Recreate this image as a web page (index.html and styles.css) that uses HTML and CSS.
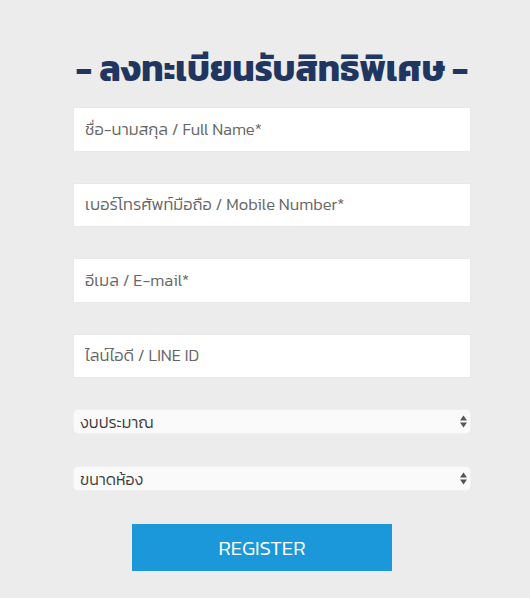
FILE: index.html
```html
<!DOCTYPE html>
<html lang="th">
<head>
    <meta charset="UTF-8">
    <meta name="viewport" content="width=device-width, initial-scale=1.0">
    <title>ลงทะเบียนรับสิทธิพิเศษ</title>
    <link rel="stylesheet" href="styles.css">
</head>
<body>

<!-- ฟอร์มลงทะเบียน -->
<div class="register-box">
    <h2 class="register-title">- ลงทะเบียนรับสิทธิพิเศษ -</h2>

    <form class="register-form">
        <input type="text" class="field" placeholder="ชื่อ-นามสกุล / Full Name*">
        <input type="tel" class="field" placeholder="เบอร์โทรศัพท์มือถือ / Mobile Number*">
        <input type="email" class="field" placeholder="อีเมล / E-mail*">
        <input type="text" class="field" placeholder="ไลน์ไอดี / LINE ID">

        <div class="select-wrap">
            <select class="picker">
                <option>งบประมาณ</option>
            </select>
            <svg class="picker-arrows" width="7" height="13" viewBox="0 0 7 13">
                <path d="M3.5 0.5 L7 5.5 L0 5.5 Z" fill="#555"/>
                <path d="M0 7.5 L7 7.5 L3.5 12.5 Z" fill="#555"/>
            </svg>
        </div>

        <div class="select-wrap">
            <select class="picker">
                <option>ขนาดห้อง</option>
            </select>
            <svg class="picker-arrows" width="7" height="13" viewBox="0 0 7 13">
                <path d="M3.5 0.5 L7 5.5 L0 5.5 Z" fill="#555"/>
                <path d="M0 7.5 L7 7.5 L3.5 12.5 Z" fill="#555"/>
            </svg>
        </div>

        <button type="button" class="register-btn">REGISTER</button>
    </form>
</div>

</body>
</html>
```

FILE: styles.css
```css
body {
    font-family: "Kanit", "Noto Sans", sans-serif;
    margin: 0;
    padding: 0;
    background-color: #ececec;
}

.register-box {
    width: 398px;
    margin: 0 0 0 73px;
    padding-top: 46px;
}

.register-title {
    margin: 0 0 15px;
    font-size: 35.5px;
    font-weight: 700;
    color: #1f3661;
    text-align: center;
    line-height: 46px;
    white-space: nowrap;
}

.register-form {
    display: flex;
    flex-direction: column;
    align-items: flex-start;
}

.field {
    box-sizing: border-box;
    width: 100%;
    height: 44.5px;
    margin-bottom: 31px;
    padding: 0 11px;
    border: 1px solid #e8e8e8;
    background-color: #ffffff;
    font-family: inherit;
    font-size: 16.5px;
    font-weight: 300;
    color: #555;
    outline: none;
}

.field::placeholder {
    color: #666666;
}

.select-wrap {
    position: relative;
    width: 100%;
    margin-bottom: 32px;
}

.picker-arrows {
    position: absolute;
    right: 4px;
    top: 6px;
    pointer-events: none;
}

.picker {
    display: block;
    box-sizing: border-box;
    width: 100%;
    height: 25px;
    padding: 0 6px;
    border: 1px solid #f0f0f0;
    border-radius: 5px;
    background-color: #fafafa;
    font-family: inherit;
    font-size: 16px;
    font-weight: 300;
    color: #3a3a3a;
    appearance: none;
    -webkit-appearance: none;
}

.register-btn {
    width: 260px;
    height: 47px;
    margin: 1px 0 0 59px;
    border: none;
    background-color: #1b98da;
    color: #ffffff;
    font-family: inherit;
    font-size: 20.5px;
    font-weight: 300;
    cursor: pointer;
}
```
